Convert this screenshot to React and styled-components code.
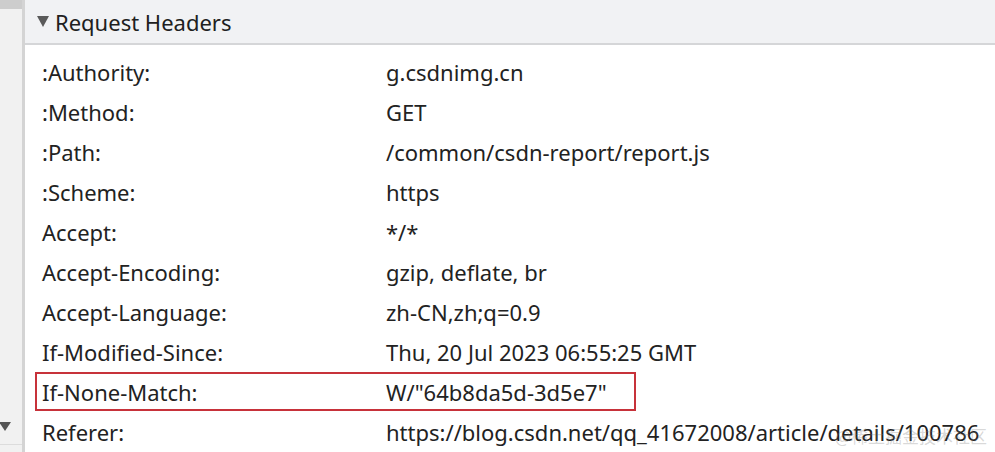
import React from 'react';
import styled, { createGlobalStyle } from 'styled-components';

const Global = createGlobalStyle`
  html, body { margin: 0; padding: 0; background: #fff; }
  body { font-family: "Noto Sans", "Open Sans", sans-serif; color: #1f1f1f; }
`;

const Page = styled.div`
  display: flex;
  width: 995px;
  height: 452px;
  overflow: hidden;
  position: relative;
`;

const Gutter = styled.div`
  width: 22px;
  flex: none;
  background: #f1f1f1;
  border-right: 3px solid #d4d4d4;
  display: flex;
  flex-direction: column;
`;

const GutterCap = styled.div`
  height: 9px;
  background: #cdcdcd;
`;

const GutterFill = styled.div`
  flex: 1;
`;

const GutterArrow = styled.div`
  height: 22px;
  display: flex;
  align-items: flex-start;
  svg { display: block; margin-left: -1px; }
`;

const GutterFoot = styled.div`
  height: 7px;
  border-top: 1px solid #dcdcdc;
`;

const Main = styled.div`
  flex: 1;
  min-width: 0;
  display: flex;
  flex-direction: column;
`;

const SectionHeader = styled.div`
  height: 44px;
  background: #f1f2f4;
  border-bottom: 2px solid #d5d6d8;
  display: flex;
  align-items: center;
  gap: 6px;
  padding-left: 12px;
  font-size: 22px;
  color: #202020;
`;

const Rows = styled.div`
  padding: 7px 0 0 17px;
  display: flex;
  flex-direction: column;
`;

const Row = styled.div`
  display: grid;
  grid-template-columns: 344px auto;
  align-items: center;
  height: 40px;
  box-sizing: border-box;
  font-size: 22px;
  white-space: nowrap;
  ${(p) =>
    p.$highlight &&
    `
    width: 601px;
    margin-left: -7px;
    padding-left: 5px;
    border: 2px solid #c7323a;
    grid-template-columns: 344px auto;
    height: 39px;
    margin-bottom: 1px;
  `}
`;

const Key = styled.span`
  color: #222;
`;

const Value = styled.span`
  color: #222;
`;

const Watermark = styled.div`
  position: absolute;
  right: 8px;
  bottom: 4px;
  font-family: "Noto Sans CJK SC", sans-serif;
  font-size: 17px;
  color: rgba(120, 120, 120, 0.3);
  pointer-events: none;
`;

const headers = [
  [':Authority:', 'g.csdnimg.cn'],
  [':Method:', 'GET'],
  [':Path:', '/common/csdn-report/report.js'],
  [':Scheme:', 'https'],
  ['Accept:', '*/*'],
  ['Accept-Encoding:', 'gzip, deflate, br'],
  ['Accept-Language:', 'zh-CN,zh;q=0.9'],
  ['If-Modified-Since:', 'Thu, 20 Jul 2023 06:55:25 GMT'],
  ['If-None-Match:', 'W/"64b8da5d-3d5e7"', true],
  ['Referer:', 'https://blog.csdn.net/qq_41672008/article/details/100786'],
];

const App = () => (
  <Page>
    <Global />
    <Gutter>
      <GutterCap />
      <GutterFill />
      <GutterArrow>
        <svg width="12" height="9" viewBox="0 0 12 9">
          <path d="M0 0 H12 L6 9 Z" fill="#555" />
        </svg>
      </GutterArrow>
      <GutterFoot />
    </Gutter>
    <Main>
      <SectionHeader>
        <svg width="12" height="11" viewBox="0 0 12 11">
          <path d="M0 0 H12 L6 11 Z" fill="#5a5a5a" />
        </svg>
        <span>Request Headers</span>
      </SectionHeader>
      <Rows>
        {headers.map(([k, v, hl]) => (
          <Row key={k} $highlight={hl}>
            <Key>{k}</Key>
            <Value>{v}</Value>
          </Row>
        ))}
      </Rows>
    </Main>
    <Watermark>@稀土掘金技术社区</Watermark>
  </Page>
);

export default App;
